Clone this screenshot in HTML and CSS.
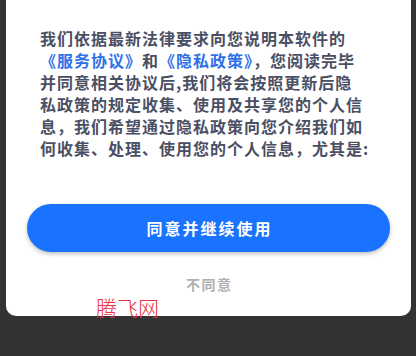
FILE: index.html
```html
<!DOCTYPE html>
<html lang="zh-CN">
<head>
  <meta charset="UTF-8">
  <meta name="viewport" content="width=device-width, initial-scale=1.0">
  <link rel="stylesheet" href="styles.css">
</head>
<body>
  <div class="dialog">
    <p class="dialog-title">【隐私权政策】</p>
    <p class="dialog-text">
      我们依据最新法律要求向您说明本软件的<br>
      <a class="link" href="#">《服务协议》</a>和<a class="link" href="#">《隐私政策》</a>，您阅读完毕<br>
      并同意相关协议后,我们将会按照更新后隐<br>
      私政策的规定收集、使用及共享您的个人信<br>
      息，我们希望通过隐私政策向您介绍我们如<br>
      何收集、处理、使用您的个人信息，尤其是:
    </p>
    <button class="btn-agree">同意并继续使用</button>
    <div class="btn-refuse">不同意</div>
  </div>

  <!-- 水印 -->
  <div class="watermark">腾飞网</div>
</body>
</html>
```

FILE: styles.css
```css
body {
  margin: 0;
  height: 356px;
  overflow: hidden;
  background: #333333;
  font-family: "Noto Sans CJK SC", "Noto Sans", sans-serif;
  position: relative;
}

.dialog {
  margin: -45px 5px 0 6px;
  padding: 22px 34px 22px;
  background: #ffffff;
  border-radius: 10px;
}

/* 标题只露出最底下一点 */
.dialog-title {
  margin: 0 0 28px;
  font-size: 16px;
  line-height: 22px;
  font-weight: 700;
  letter-spacing: 1px;
  color: #4b4f63;
}

.dialog-text {
  margin: 0;
  font-size: 16px;
  line-height: 22px;
  font-weight: 700;
  letter-spacing: 1px;
  color: #4b4f63;
  white-space: nowrap;
}

.link {
  color: #2f6fe8;
  text-decoration: none;
}

.btn-agree {
  display: block;
  width: calc(100% + 26px);
  height: 48px;
  margin: 45px -13px 0;
  border: none;
  border-radius: 24px;
  background: #1a73fe;
  box-shadow: 0 2px 4px rgba(0, 0, 0, 0.25);
  color: #ffffff;
  font-family: inherit;
  font-size: 16px;
  font-weight: 700;
  letter-spacing: 2px;
  text-indent: 2px;
  cursor: pointer;
}

.btn-refuse {
  margin-top: 22px;
  height: 20px;
  line-height: 20px;
  text-align: center;
  font-size: 14px;
  font-weight: 700;
  letter-spacing: 1.5px;
  text-indent: 1.5px;
  color: #b0b0b0;
}

.watermark {
  position: absolute;
  left: 96px;
  top: 294px;
  font-size: 21px;
  line-height: 26px;
  font-weight: 300;
  color: #e8323c;
}
```
